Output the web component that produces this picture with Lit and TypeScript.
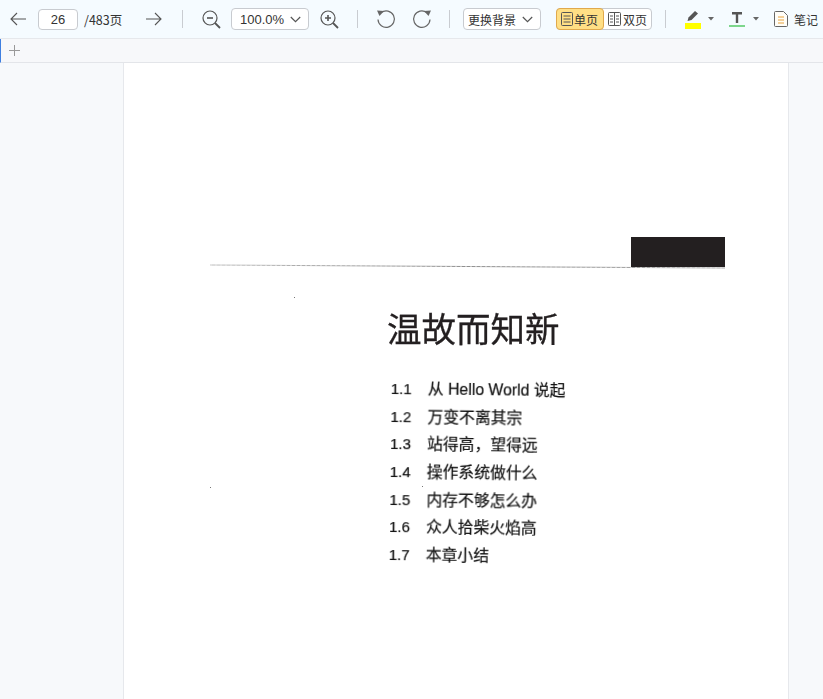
import { css, html, LitElement } from 'lit';
import { customElement } from 'lit/decorators.js';

const TOC = [
  ['1.1', '从 Hello World 说起'],
  ['1.2', '万变不离其宗'],
  ['1.3', '站得高，望得远'],
  ['1.4', '操作系统做什么'],
  ['1.5', '内存不够怎么办'],
  ['1.6', '众人拾柴火焰高'],
  ['1.7', '本章小结'],
];

const chevron = html`<svg class="chev" width="11" height="7" viewBox="0 0 11 7"><path d="M.8 1l4.7 4.7L10.2 1" fill="none" stroke="#555" stroke-width="1.2"/></svg>`;
const caret = html`<svg class="caret" width="6" height="4" viewBox="0 0 6 4"><path d="M0 0h6L3 3.6z" fill="#666"/></svg>`;

@customElement('app-root')
export class AppRoot extends LitElement {
  static styles = css`
    :host {
      display: flex;
      flex-direction: column;
      height: 100vh;
      overflow: hidden;
      background: #f7f9fb;
      font-family: 'Noto Sans CJK SC', 'Liberation Sans', sans-serif;
      color: #333;
      font-size: 12px;
    }
    .toolbar {
      flex: none;
      display: flex;
      align-items: center;
      height: 38px;
      background: #f5fbff;
      border-bottom: 1px solid #e6e8ec;
    }
    .toolbar svg {
      display: block;
      flex: none;
    }
    .page-input {
      width: 38px;
      height: 19px;
      margin-left: 12px;
      border: 1px solid #c8cbd0;
      border-radius: 4px;
      background: #fff;
      text-align: center;
      line-height: 19px;
      font-family: 'Liberation Sans', sans-serif;
      font-size: 13px;
    }
    .total {
      margin-left: 6px;
      width: 38px;
      white-space: nowrap;
      font-size: 12.5px;
    }
    .sep {
      width: 1px;
      height: 18px;
      background: #c9ccd1;
      flex: none;
    }
    .select {
      display: flex;
      align-items: center;
      justify-content: space-between;
      box-sizing: border-box;
      width: 78px;
      height: 22px;
      padding: 0 7px 0 4px;
      border: 1px solid #c8cbd0;
      border-radius: 4px;
      background: #fff;
      white-space: nowrap;
    }
    .select.zoom {
      padding-left: 8px;
      font-family: 'Liberation Sans', sans-serif;
      font-size: 13px;
    }
    .segment {
      display: flex;
      margin-left: 15px;
      width: 96px;
      height: 22px;
      box-sizing: border-box;
      border: 1px solid #c8cbd0;
      border-radius: 4px;
      background: #fff;
    }
    .segment div {
      display: flex;
      align-items: center;
      gap: 2px;
      padding-left: 4px;
    }
    .segment .on {
      gap: 1px;
      width: 48px;
      box-sizing: border-box;
      margin: -1px 0 -1px -1px;
      background: #ffdf85;
      border: 1px solid #e0a94c;
      border-radius: 4px;
    }
    .tabs {
      flex: none;
      display: flex;
      align-items: center;
      height: 23px;
      background: #f7f8fa;
      border-left: 1px solid #3f7fe0;
      border-bottom: 1px solid #e3e5e9;
      padding-left: 8px;
    }
    .viewer {
      flex: 1;
      display: flex;
      padding-left: 123px;
    }
    .page {
      position: relative;
      box-sizing: border-box;
      width: 666px;
      background: #fff;
      border-left: 1px solid #e6e8ec;
      border-right: 1px solid #e6e8ec;
      padding: 244px 0 0 263px;
      color: #231f20;
    }
    .rule {
      position: absolute;
      left: 86px;
      top: 203px;
      width: 515px;
      height: 1px;
      background: repeating-linear-gradient(90deg, rgba(255, 255, 255, 0.45) 0 2px, transparent 2px 5px),
        linear-gradient(90deg, #bcbcbc, #8f8f8f 50%, #a8a8a8);
      transform: rotate(0.33deg);
    }
    .block {
      position: absolute;
      left: 507px;
      top: 174px;
      width: 94px;
      height: 30px;
      background: #231f20;
    }
    .speck {
      position: absolute;
      width: 1px;
      height: 1px;
      background: #777;
    }
    h1 {
      margin: 0;
      font-size: 34.5px;
      font-weight: 400;
      line-height: 40px;
      color: #231f20;
      -webkit-text-stroke: 0.3px #231f20;
      filter: blur(0.3px);
    }
    .toc {
      margin: 27.5px 0 0 4px;
      transform: rotate(0.7deg);
      transform-origin: 0 0;
      filter: blur(0.2px);
    }
    .row {
      display: flex;
      align-items: baseline;
      line-height: 27.7px;
      height: 27.7px;
      font-size: 15.8px;
      white-space: nowrap;
      color: #111;
      -webkit-text-stroke: 0.2px #111;
    }
    .num {
      width: 37px;
      font-family: 'Liberation Sans', sans-serif;
      font-size: 15px;
    }
    .title {
      font-family: 'Liberation Sans', 'Noto Sans CJK SC', sans-serif;
    }
  `;

  render() {
    return html`
      <div class="toolbar">
        <svg style="margin-left:10px" width="16" height="14" viewBox="0 0 16 14"><path d="M7 1L1 7l6 6M1 7h15" fill="none" stroke="#555" stroke-width="1.1"/></svg>
        <div class="page-input">26</div>
        <div class="total">/483页</div>
        <svg style="margin-left:24px" width="16" height="14" viewBox="0 0 16 14"><path d="M9 1l6 6-6 6M15 7H0" fill="none" stroke="#555" stroke-width="1.1"/></svg>
        <div class="sep" style="margin-left:20px"></div>
        <svg style="margin-left:19px" width="19" height="19" viewBox="0 0 19 19"><circle cx="8" cy="8" r="7" fill="none" stroke="#555" stroke-width="1.2"/><path d="M5 8h6" stroke="#555" stroke-width="1.6"/><path d="M13 13l5 5" stroke="#555" stroke-width="1.8"/></svg>
        <div class="select zoom" style="margin-left:10px">100.0% ${chevron}</div>
        <svg style="margin-left:11px" width="19" height="19" viewBox="0 0 19 19"><circle cx="8" cy="8" r="7" fill="none" stroke="#555" stroke-width="1.2"/><path d="M5 8h6M8 5v6" stroke="#555" stroke-width="1.6"/><path d="M13 13l5 5" stroke="#555" stroke-width="1.8"/></svg>
        <div class="sep" style="margin-left:18px"></div>
        <svg style="margin-left:18px" width="20" height="20" viewBox="0 0 20 20"><path d="M5.2 3.6A8.2 8.2 0 1 1 2 10.5" fill="none" stroke="#666" stroke-width="1.2"/><path d="M1 1.5l7 .5-4.5 5z" fill="#666"/></svg>
        <svg style="margin-left:16px" width="20" height="20" viewBox="0 0 20 20"><path d="M14.8 3.6A8.2 8.2 0 1 0 18 10.5" fill="none" stroke="#666" stroke-width="1.2"/><path d="M19 1.5l-7 .5 4.5 5z" fill="#666"/></svg>
        <div class="sep" style="margin-left:17px"></div>
        <div class="select" style="margin-left:13px">更换背景 ${chevron}</div>
        <div class="segment">
          <div class="on">
            <svg width="12" height="14" viewBox="0 0 12 14"><rect x=".5" y=".5" width="11" height="13" rx="1" fill="none" stroke="#555"/><path d="M2.5 4h7M2.5 7h7M2.5 10h7" stroke="#555"/></svg>单页
          </div>
          <div>
            <svg width="13" height="14" viewBox="0 0 13 14"><rect x=".5" y=".5" width="12" height="13" rx="1" fill="none" stroke="#555"/><path d="M6.5 0v14M2 4h3M2 7h3M2 10h3M8 4h3M8 7h3M8 10h3" stroke="#555"/></svg>双页
          </div>
        </div>
        <div class="sep" style="margin-left:13px"></div>
        <svg style="margin-left:19px" width="16" height="20" viewBox="0 0 16 20"><path d="M2.5 12l1-3.5L10 2l3 2.5L6.5 11z" fill="#555"/><rect y="14" width="16" height="6" fill="#ffff00"/></svg>
        <span style="margin-left:7px">${caret}</span>
        <svg style="margin-left:15px" width="16" height="20" viewBox="0 0 16 20"><path d="M3 3h10v2.4H9.2V14H6.8V5.4H3z" fill="#555"/><rect y="16" width="16" height="2" fill="#7dd68c"/></svg>
        <span style="margin-left:8px">${caret}</span>
        <svg style="margin-left:15px" width="14" height="16" viewBox="0 0 14 16"><path d="M1.5.5h8l4 4v10a1 1 0 0 1-1 1h-11a1 1 0 0 1-1-1v-13a1 1 0 0 1 1-1z" fill="#fffdf7" stroke="#666"/><path d="M4 6h6M4 9h6M4 12h6" stroke="#e8a33d"/></svg>
        <div style="margin-left:6px;white-space:nowrap">笔记</div>
      </div>
      <div class="tabs">
        <svg width="11" height="11" viewBox="0 0 11 11"><path d="M5.5 0v11M0 5.5h11" stroke="#999" stroke-width="1"/></svg>
      </div>
      <div class="viewer">
        <div class="page">
          <div class="rule"></div>
          <div class="block"></div>
          <div class="speck" style="left:170px;top:234px"></div>
          <div class="speck" style="left:86px;top:424px"></div>
          <div class="speck" style="left:298px;top:423px"></div>
          <h1>温故而知新</h1>
          <div class="toc">
            ${TOC.map(
              ([num, title]) => html`
                <div class="row"><span class="num">${num}</span><span class="title">${title}</span></div>
              `
            )}
          </div>
        </div>
      </div>
    `;
  }
}
